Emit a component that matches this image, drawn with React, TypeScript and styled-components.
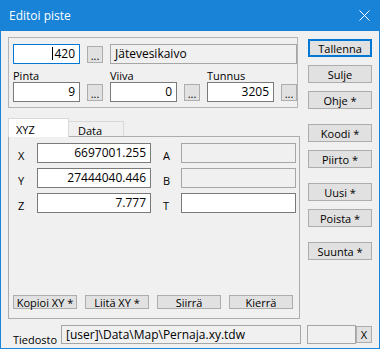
import React from 'react';
import styled, { createGlobalStyle, css } from 'styled-components';

const GlobalStyle = createGlobalStyle`
  html, body {
    margin: 0;
    padding: 0;
    background: #f0f0f0;
  }
  * {
    box-sizing: border-box;
  }
`;

const Window = styled.div`
  width: 380px;
  height: 349px;
  display: flex;
  flex-direction: column;
  background: #f0f0f0;
  border: 1px solid #1883d7;
  border-top: none;
  font-family: "Open Sans", "Noto Sans", sans-serif;
  font-size: 11px;
  color: #000;
`;

const TitleBar = styled.div`
  height: 31px;
  margin: 0 -1px;
  padding: 0 10px 0 9px;
  display: flex;
  align-items: center;
  justify-content: space-between;
  background: #1883d7;
  color: #fff;
  font-size: 12px;
`;

const Body = styled.div`
  flex: 1;
  display: flex;
  flex-direction: column;
  padding: 6px 7px 0 7px;
`;

const MainRow = styled.div`
  display: flex;
  gap: 9px;
`;

const LeftCol = styled.div`
  width: 291px;
  display: flex;
  flex-direction: column;
`;

const RightCol = styled.div`
  width: 64px;
  padding-top: 2px;
  display: flex;
  flex-direction: column;
`;

const GroupBox = styled.div`
  width: 290px;
  height: 71px;
  border: 1px solid #b4b4b4;
  padding: 6px 0 0 4px;
  display: flex;
  flex-direction: column;
`;

const Row = styled.div`
  display: flex;
  align-items: flex-start;
`;

const Field = styled.div`
  display: flex;
  flex-direction: column;
  margin-right: 7px;
`;

const FieldLabel = styled.div`
  height: 13px;
  margin-top: 5px;
  line-height: 13px;
`;

const FieldLine = styled.div`
  display: flex;
  align-items: center;
  gap: 7px;
`;

const TextBox = styled.div<{
  $w: number;
  $h?: number;
  $ml?: number;
  $align?: 'left' | 'right';
  $disabled?: boolean;
  $focused?: boolean;
}>`
  width: ${(p) => p.$w}px;
  height: ${(p) => p.$h ?? 20}px;
  margin-left: ${(p) => p.$ml ?? 0}px;
  line-height: ${(p) => (p.$h ?? 20) - 2}px;
  padding: 0 4px;
  border: 1px solid ${(p) => (p.$focused ? '#0078d7' : p.$disabled ? '#a6a6a6' : '#7a7a7a')};
  background: ${(p) => (p.$disabled ? '#f0f0f0' : '#fff')};
  text-align: ${(p) => p.$align ?? 'left'};
  font-size: 12px;
  white-space: nowrap;
  overflow: hidden;
`;

const Caret = styled.span`
  display: inline-block;
  width: 1px;
  height: 13px;
  margin-right: 1px;
  vertical-align: -2px;
  background: #000;
`;

const DotsButton = styled.div`
  width: 16px;
  height: 17px;
  border: 1px solid #adadad;
  background: #e1e1e1;
  font-size: 11px;
  line-height: 17px;
  text-align: center;
`;

const Button = styled.div<{ $top?: number; $default?: boolean; $w?: number; $h?: number }>`
  width: ${(p) => p.$w ?? 64}px;
  height: ${(p) => p.$h ?? 18}px;
  margin-top: ${(p) => p.$top ?? 0}px;
  border: 1px solid #adadad;
  background: #e1e1e1;
  display: flex;
  align-items: center;
  justify-content: center;
  white-space: nowrap;
  ${(p) =>
    p.$default &&
    css`
      border: 2px solid #0078d7;
    `}
`;

const TabStrip = styled.div`
  margin-top: 9px;
  height: 19px;
  display: flex;
  align-items: flex-end;
`;

const Tab = styled.div<{ $active?: boolean }>`
  height: ${(p) => (p.$active ? 19 : 15)}px;
  width: ${(p) => (p.$active ? 61 : 55)}px;
  padding: ${(p) => (p.$active ? '3px 0 0 7px' : '1px 0 0 9px')};
  border: 1px solid #d9d9d9;
  border-bottom: none;
  background: ${(p) => (p.$active ? '#fff' : '#f0f0f0')};
  ${(p) => !p.$active && css`border-left: none;`}
  font-size: 11px;
  margin-bottom: ${(p) => (p.$active ? -1 : 0)}px;
  position: relative;
`;

const TabPanel = styled.div`
  width: 292px;
  height: 183px;
  border: 1px solid #adadad;
  display: flex;
  flex-direction: column;
  padding: 6px 0 9px 0;
`;

const CoordGrid = styled.div`
  display: grid;
  grid-template-columns: 28px 114px 30px 115px;
  row-gap: 5px;
`;

const CoordLabel = styled.div<{ $pad: number }>`
  padding: 5px 0 0 ${(p) => p.$pad}px;
  font-size: 11px;
`;

const BottomButtons = styled.div`
  margin-top: auto;
  padding-left: 4px;
  display: flex;
  gap: 8px;
`;

const FileRow = styled.div`
  margin-top: 6px;
  display: flex;
  align-items: flex-start;
`;

const FileLabel = styled.div`
  width: 53px;
  padding: 7px 0 0 5px;
`;

const CloseIcon = () => (
  <svg width="11" height="11" viewBox="0 0 11 11">
    <path d="M0.5 0.5 L10.5 10.5 M10.5 0.5 L0.5 10.5" stroke="#fff" strokeWidth="1" />
  </svg>
);

export default function App() {
  return (
    <>
      <GlobalStyle />
      <Window>
        <TitleBar>
          <span>Editoi piste</span>
          <CloseIcon />
        </TitleBar>
        <Body>
          <MainRow>
            <LeftCol>
              <GroupBox>
                <Row>
                  <FieldLine>
                    <TextBox $w={67} $align="right" $focused>
                      <Caret />420
                    </TextBox>
                    <DotsButton>...</DotsButton>
                    <TextBox $w={187} $disabled>Jätevesikaivo</TextBox>
                  </FieldLine>
                </Row>
                <Row>
                  <Field>
                    <FieldLabel>Pinta</FieldLabel>
                    <FieldLine>
                      <TextBox $w={67} $align="right">9</TextBox>
                      <DotsButton>...</DotsButton>
                    </FieldLine>
                  </Field>
                  <Field>
                    <FieldLabel>Viiva</FieldLabel>
                    <FieldLine>
                      <TextBox $w={67} $align="right">0</TextBox>
                      <DotsButton>...</DotsButton>
                    </FieldLine>
                  </Field>
                  <Field>
                    <FieldLabel>Tunnus</FieldLabel>
                    <FieldLine>
                      <TextBox $w={67} $align="right">3205</TextBox>
                      <DotsButton>...</DotsButton>
                    </FieldLine>
                  </Field>
                </Row>
              </GroupBox>

              <TabStrip>
                <Tab $active>XYZ</Tab>
                <Tab>Data</Tab>
              </TabStrip>
              <TabPanel>
                <CoordGrid>
                  <CoordLabel $pad={9}>X</CoordLabel>
                  <TextBox $w={114} $align="right">6697001.255</TextBox>
                  <CoordLabel $pad={12}>A</CoordLabel>
                  <TextBox $w={115} $disabled />
                  <CoordLabel $pad={9}>Y</CoordLabel>
                  <TextBox $w={114} $align="right">27444040.446</TextBox>
                  <CoordLabel $pad={12}>B</CoordLabel>
                  <TextBox $w={115} $disabled />
                  <CoordLabel $pad={9}>Z</CoordLabel>
                  <TextBox $w={114} $align="right">7.777</TextBox>
                  <CoordLabel $pad={12}>T</CoordLabel>
                  <TextBox $w={115} />
                </CoordGrid>
                <BottomButtons>
                  <Button $h={14}>Kopioi XY *</Button>
                  <Button $h={14}>Liitä XY *</Button>
                  <Button $h={14}>Siirrä</Button>
                  <Button $h={14}>Kierrä</Button>
                </BottomButtons>
              </TabPanel>
            </LeftCol>

            <RightCol>
              <Button $default>Tallenna</Button>
              <Button $top={8}>Sulje</Button>
              <Button $top={8}>Ohje *</Button>
              <Button $top={15}>Koodi *</Button>
              <Button $top={8}>Piirto *</Button>
              <Button $top={15}>Uusi *</Button>
              <Button $top={8}>Poista *</Button>
              <Button $top={15}>Suunta *</Button>
            </RightCol>
          </MainRow>

          <FileRow>
            <FileLabel>Tiedosto</FileLabel>
            <TextBox $w={240} $h={19} $disabled>[user]\Data\Map\Pernaja.xy.tdw</TextBox>
            <TextBox $w={49} $h={19} $ml={6} $disabled />
            <Button $w={16} $h={17} $top={1}>X</Button>
          </FileRow>
        </Body>
      </Window>
    </>
  );
}
